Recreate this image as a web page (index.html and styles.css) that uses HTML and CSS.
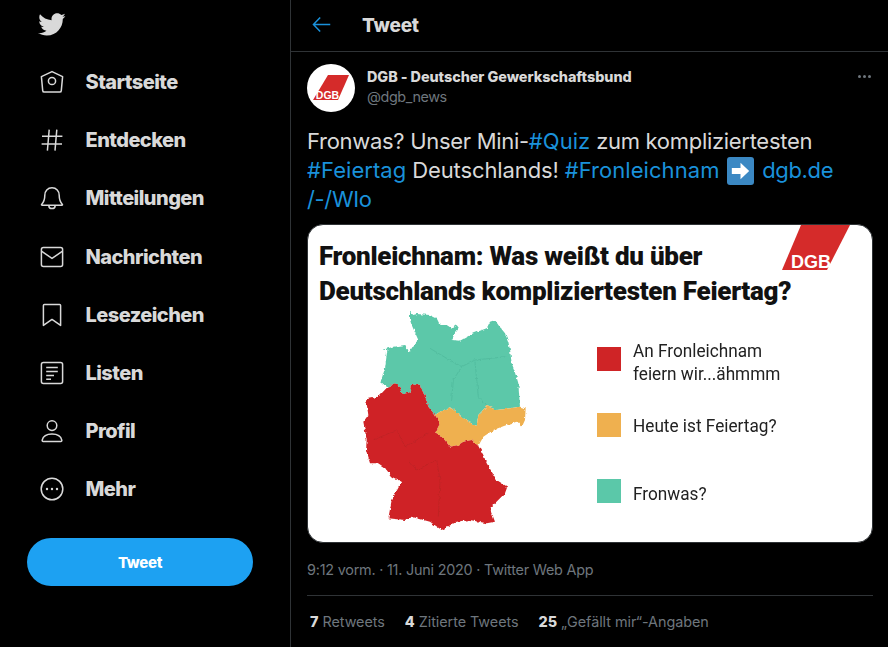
FILE: index.html
```html
<!DOCTYPE html>
<html lang="de">
<head>
<meta charset="utf-8">
<title>Tweet</title>
<link rel="stylesheet" href="styles.css">
</head>
<body>
<div class="app">
  <aside class="side">
    <div class="logo-row">
      <svg class="logo" viewBox="0 0 24 24"><path fill="currentColor" d="M23.643 4.937c-.835.37-1.732.62-2.675.733.962-.576 1.7-1.49 2.048-2.578-.9.534-1.897.922-2.958 1.13-.85-.904-2.06-1.47-3.4-1.47-2.572 0-4.658 2.086-4.658 4.66 0 .364.042.718.12 1.06-3.873-.195-7.304-2.05-9.602-4.868-.4.69-.63 1.49-.63 2.342 0 1.616.823 3.043 2.072 3.878-.764-.025-1.482-.234-2.11-.583v.06c0 2.257 1.605 4.14 3.737 4.568-.392.106-.803.162-1.227.162-.3 0-.593-.028-.877-.082.593 1.85 2.313 3.198 4.352 3.234-1.595 1.25-3.604 1.995-5.786 1.995-.376 0-.747-.022-1.112-.065 2.062 1.323 4.51 2.093 7.14 2.093 8.57 0 13.255-7.098 13.255-13.254 0-.2-.005-.402-.014-.602.91-.658 1.7-1.477 2.323-2.41z"/></svg>
    </div>
    <nav class="nav">
      <a class="nav-item"><svg class="ico" viewBox="0 0 24 24"><path d="M12 1.6 22.6 6.600 21.300 20.600a1.600 1.600 0 0 1-1.600 1.500H4.300a1.600 1.600 0 0 1-1.600-1.500L1.400 6.600Z"/><circle cx="12" cy="11" r="3.600"/></svg><span>Startseite</span></a>
      <a class="nav-item"><svg class="ico" viewBox="0 0 24 24"><path d="M2 8.200H22.400M1.600 16H22M9.200 1.600 7.400 22.600M16.800 1.600 15 22.600"/></svg><span>Entdecken</span></a>
      <a class="nav-item"><svg class="ico" viewBox="0 0 24 24"><path d="M12 1.800c-4.400 0-7.200 3.300-7.200 7.400 0 4.600-.8 6.700-3.200 9.200-.3.4 0 .9.500.9h19.800c.5 0 .8-.5.5-.9-2.400-2.500-3.200-4.600-3.200-9.200 0-4.100-2.800-7.400-7.200-7.400Z"/><path d="M8.800 19.400c0 2 1.400 3.200 3.200 3.200s3.200-1.200 3.200-3.200"/></svg><span>Mitteilungen</span></a>
      <a class="nav-item"><svg class="ico" viewBox="0 0 24 24"><rect x="1.400" y="2.600" width="21.200" height="18.800" rx="2"/><path d="M1.800 6.400 12 13.400 22.200 6.400"/></svg><span>Nachrichten</span></a>
      <a class="nav-item"><svg class="ico" viewBox="0 0 24 24"><path d="M3.400 2.600a1 1 0 0 1 1-1h15.200a1 1 0 0 1 1 1V22.400L12 16.400 3.400 22.400Z"/></svg><span>Lesezeichen</span></a>
      <a class="nav-item"><svg class="ico" viewBox="0 0 24 24"><rect x="1.400" y="1.400" width="21.200" height="21.200" rx="2"/><path d="M6.200 6.600H17.800M6.200 10.600H17.800M6.200 14.600H14M6.200 18.200H11"/></svg><span>Listen</span></a>
      <a class="nav-item"><svg class="ico" viewBox="0 0 24 24"><circle cx="12" cy="6.600" r="4.800"/><path d="M3.200 22.400c-.8 0-1.200-.5-1-1.300.9-4 4.600-6.100 9.800-6.100s8.900 2.100 9.800 6.100c.2.800-.2 1.300-1 1.300Z"/></svg><span>Profil</span></a>
      <a class="nav-item"><svg class="ico" viewBox="0 0 24 24"><circle cx="12" cy="12" r="10.800"/><circle class="dot" cx="7" cy="12" r="1.200"/><circle class="dot" cx="12" cy="12" r="1.200"/><circle class="dot" cx="17" cy="12" r="1.200"/></svg><span>Mehr</span></a>
    </nav>
    <button class="tweet-btn">Tweet</button>
  </aside>
  <main class="main">
    <header class="top">
      <svg class="back" viewBox="0 0 24 24"><path d="M22 12H3M10.500 4 2.800 12 10.500 20"/></svg>
      <h1 class="top-title">Tweet</h1>
    </header>
    <article class="tweet">
      <div class="author">
        <svg class="avatar" viewBox="0 0 48 48"><circle cx="24" cy="24" r="24" fill="#fff"/><path fill="#d52b2a" d="M21 11H42L31 36H6Z"/><text class="avatar-text" x="20.500" y="35" text-anchor="middle">DGB</text></svg>
        <div class="names">
          <div class="name">DGB - Deutscher Gewerkschaftsbund</div>
          <div class="handle">@dgb_news</div>
        </div>
        <div class="more"><i></i><i></i><i></i></div>
      </div>
      <p class="text">Fronwas? Unser Mini-<a>#Quiz</a> zum kompliziertesten<br><a>#Feiertag</a> <span class="wide">Deutschlands!</span> <a>#Fronleichnam</a> <span class="emoji"><svg viewBox="0 0 28 28"><path fill="#fff" d="M5 11H14V5.500L23 14 14 22.500V17H5Z"/></svg></span> <a class="tight">dgb.de<br>/-/WIo</a></p>
      <figure class="card">
        <svg class="card-logo" viewBox="0 0 68 50"><path fill="#d52b2a" d="M19 0H68L45 45H0Z"/><text class="card-logo-text" x="29" y="43" text-anchor="middle">DGB</text></svg>
        <h2 class="card-title">Fronleichnam: Was weißt du über<br>Deutschlands kompliziertesten Feiertag?</h2>
        <div class="card-body">
          <svg class="map" viewBox="0 0 570 705">
            <defs>
              <filter id="rough" x="-5%" y="-5%" width="110%" height="110%">
                <feTurbulence type="fractalNoise" baseFrequency="0.09" numOctaves="2" seed="4" result="n"/>
                <feDisplacementMap in="SourceGraphic" in2="n" scale="11" xChannelSelector="R" yChannelSelector="G"/>
              </filter>
            </defs>
            <g filter="url(#rough)">
              <path fill="#5bc8a9" d="M180 35 190 45 200 42 240 45 260 55 270 75 290 75 305 85 320 75 327 85 315 100 305 120 330 122 370 100 390 92 410 85 420 65 435 60 445 75 465 100 475 125 480 150 485 190 495 215 505 250 510 320 480 325 440 330 410 318 385 345 380 378 355 365 330 345 300 322 270 335 255 345 235 320 225 290 210 255 185 248 178 278 155 282 150 260 135 250 112 262 92 245 105 205 112 150 95 150 130 140 165 135 175 160 195 130 205 120 185 75 180 60Z"/>
              <path fill="#efb04f" d="M300 322 330 345 355 365 380 378 385 345 410 318 440 330 480 325 510 320 527 325 525 360 515 382 500 365 470 375 430 390 400 410 385 438 365 420 340 425 325 435 300 440 280 415 255 400 270 370 255 345 270 335Z"/>
              <path fill="#cf2426" d="M135 250 150 260 155 282 178 278 185 248 210 255 225 290 235 320 255 345 270 370 255 400 280 415 300 440 325 435 340 425 365 420 385 438 400 465 410 490 440 540 472 560 465 580 420 625 435 665 410 670 360 660 320 665 275 690 240 665 185 650 165 660 115 655 125 600 155 545 125 530 110 510 80 490 60 490 48 450 50 420 40 365 55 345 48 298 85 290 112 262Z"/>
              <path class="map-line-g" d="M240 145 290 175 335 200 375 180 470 170M335 200 310 240 305 300M375 185 385 290 410 318"/>
              <path class="map-line-r" d="M70 420 140 390 165 440 235 400M175 480 200 510 260 480 270 540 265 650"/>
            </g>
          </svg>
          <ul class="legend">
            <li class="leg leg-a"><span class="sw sw-red"></span><span class="leg-text">An Fronleichnam<br>feiern wir...ähmmm</span></li>
            <li class="leg leg-b"><span class="sw sw-orange"></span><span class="leg-text">Heute ist Feiertag?</span></li>
            <li class="leg leg-c"><span class="sw sw-green"></span><span class="leg-text">Fronwas?</span></li>
          </ul>
        </div>
      </figure>
      <div class="meta">9:12 vorm. · 11. Juni 2020 · Twitter Web App</div>
      <div class="stats">
        <span><b>7</b> Retweets</span>
        <span><b>4</b> Zitierte Tweets</span>
        <span><b>25</b> „Gefällt mir“-Angaben</span>
      </div>
    </article>
  </main>
</div>
</body>
</html>
```

FILE: styles.css
```css
* { box-sizing: border-box; }
html, body { margin: 0; height: 100%; background: #000; overflow: hidden; }
body { font-family: Inter, "Liberation Sans", sans-serif; color: #d9d9d9; }
a { color: inherit; }
.app { display: flex; width: 888px; height: 647px; }

.side { width: 290px; flex: none; display: flex; flex-direction: column; }
.logo-row { height: 53px; padding: 10px 0 0 37px; }
.logo { display: block; width: 29px; height: 29px; color: #d9d9d9; }
.nav { display: flex; flex-direction: column; }
.nav-item { height: 58.2px; display: flex; align-items: center; padding-left: 40px; font-size: 20px; font-weight: 800; letter-spacing: -0.55px; color: #d9d9d9; }
.ico { width: 24px; height: 24px; margin-right: 21.5px; fill: none; stroke: #d9d9d9; stroke-width: 1.5; stroke-linejoin: round; flex: none; }
.ico .dot { fill: #d9d9d9; stroke: none; }
.tweet-btn { margin: 19.4px 0 0 27px; width: 226px; height: 48px; padding: 2px 0 0; border: 0; border-radius: 24px; background: #1da1f2; color: #fff; font: 800 15px Inter, "Liberation Sans", sans-serif; letter-spacing: -0.3px; }

.main { flex: 1; border-left: 1px solid #2f3336; min-width: 0; }
.top { height: 52px; border-bottom: 1px solid #2f3336; display: flex; align-items: center; padding-left: 20px; }
.back { width: 21px; height: 21px; fill: none; stroke: #1a91da; stroke-width: 1.7; margin-right: 30px; margin-top: -2px; }
.top-title { margin: 0; font-size: 19px; font-weight: 800; letter-spacing: -0.2px; color: #d9d9d9; margin-top: -1px; }

.tweet { padding: 12px 15px 0 16px; }
.author { display: flex; height: 48px; }
.avatar { width: 48px; height: 48px; flex: none; margin-right: 12px; }
.avatar-text { font: 700 10.5px "Liberation Sans", sans-serif; fill: #fff; }
.names { flex: 1; padding-top: 4px; }
.name { font-size: 14.4px; font-weight: 800; line-height: 18px; color: #d9d9d9; letter-spacing: -0.05px; }
.handle { font-size: 14.4px; line-height: 18px; margin-top: 2px; color: #6e767d; letter-spacing: -0.4px; }
.more { display: flex; gap: 2px; padding: 11px 2px 0 0; }
.more i { display: block; width: 3px; height: 3px; border-radius: 50%; background: #6e767d; }

.text { margin: 15px 0 0; font-size: 22px; line-height: 29px; color: #d9d9d9; letter-spacing: -0.3px; }
.text a { color: #1a91da; letter-spacing: 0.05px; }
.text a.tight { letter-spacing: -0.35px; }
.text .wide { letter-spacing: -0.1px; }
.emoji { display: inline-block; width: 27px; height: 28px; background: #3b88c3; border-radius: 3px; vertical-align: -7px; margin: 0 2px; }
.emoji svg { display: block; width: 100%; height: 100%; }

.card { position: relative; margin: 10px 0 0; height: 319px; width: 566px; background: #fff; border-radius: 16px; border: 1px solid #2f3336; color: #111; overflow: hidden; }
.card-logo { position: absolute; top: 0; left: 474px; width: 68px; height: 50px; }
.card-logo-text { font: 700 18px "Liberation Sans", sans-serif; fill: #fff; }
.card-title { margin: 0; padding: 14px 0 0 11px; font: 900 26px/35px Roboto, sans-serif; letter-spacing: -0.28px; color: #111; }
.card-body { display: flex; }
.map { width: 190px; height: 235px; flex: none; margin: -9px 0 0 42px; }
.map-line-g { fill: none; stroke: #4fb69a; stroke-width: 2; }
.map-line-r { fill: none; stroke: #b92024; stroke-width: 2; }
.legend { list-style: none; margin: 0; padding: 0 0 0 57px; font: 400 19px/23px Roboto, sans-serif; color: #222; }
.leg { display: flex; gap: 12px; align-items: flex-start; }
.leg-a { margin-top: 38px; height: 48px; }
.leg-b { margin-top: 18px; height: 24px; }
.leg-c { margin-top: 42px; height: 24px; }
.leg-text { display: block; transform: scaleX(0.905); transform-origin: 0 50%; white-space: nowrap; }
.leg-a .leg-text { margin-top: -8px; }
.leg-b .leg-text { margin-top: 1px; }
.leg-c .leg-text { margin-top: 3px; }
.sw { width: 24px; height: 24px; flex: none; }
.sw-red { background: #cf2426; }
.sw-orange { background: #efb04f; }
.sw-green { background: #5bc8a9; }

.meta { margin-top: 18px; font-size: 14.4px; line-height: 18px; color: #6e767d; padding-bottom: 16px; border-bottom: 1px solid #2f3336; letter-spacing: -0.22px; }
.stats { display: flex; gap: 20px; padding: 17px 0 0 3px; font-size: 14.4px; line-height: 18px; color: #6e767d; letter-spacing: -0.05px; }
.stats b { color: #d9d9d9; font-weight: 800; }
```
